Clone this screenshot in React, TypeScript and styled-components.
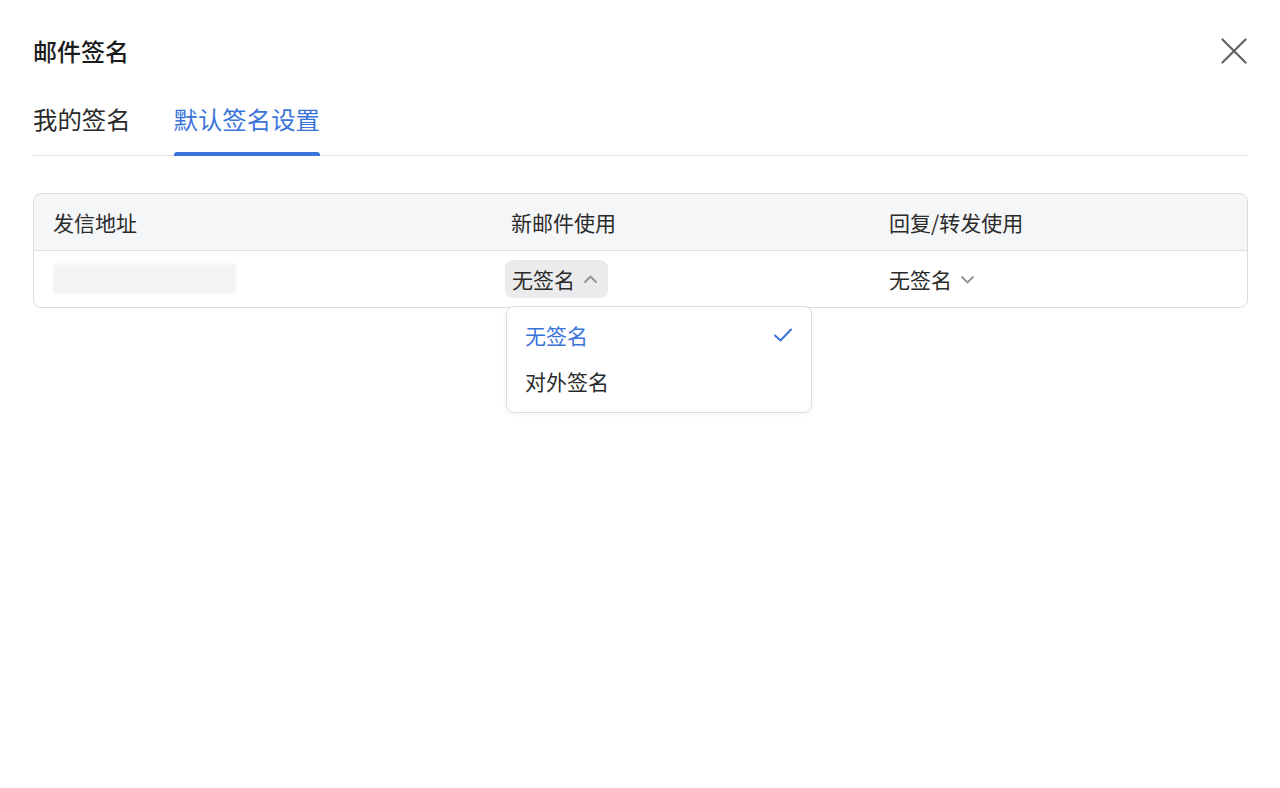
import React from "react";
import styled, { createGlobalStyle } from "styled-components";

const GlobalStyle = createGlobalStyle`
  html, body {
    margin: 0;
    padding: 0;
    background: #ffffff;
  }
  body {
    font-family: "Noto Sans CJK SC", "Noto Sans", Inter, sans-serif;
    color: #222222;
    -webkit-font-smoothing: antialiased;
  }
`;

const Dialog = styled.div`
  width: 1280px;
  height: 788px;
  box-sizing: border-box;
  padding: 35px 32px 0 33px;
  background: #ffffff;
`;

const Header = styled.div`
  display: flex;
  align-items: center;
  justify-content: space-between;
  height: 32px;
`;

const Title = styled.h1`
  margin: 0;
  font-size: 24px;
  line-height: 32px;
  font-weight: 500;
  color: #1c1c1c;
`;

const CloseButton = styled.button`
  display: flex;
  align-items: center;
  justify-content: center;
  width: 30px;
  height: 30px;
  margin-right: -1px;
  padding: 0;
  border: none;
  background: transparent;
  cursor: pointer;
`;

const TabBar = styled.div`
  display: flex;
  gap: 43px;
  margin-top: 21px;
  border-bottom: 1px solid #e2e2e4;
`;

const Tab = styled.div<{ $active?: boolean }>`
  position: relative;
  padding: 15px 0 20px;
  font-size: 24.4px;
  line-height: 32px;
  color: ${(p) => (p.$active ? "#3a74db" : "#2a2a2a")};
  &::after {
    content: "";
    display: ${(p) => (p.$active ? "block" : "none")};
    position: absolute;
    left: 0;
    right: 0;
    bottom: -1px;
    height: 4px;
    border-radius: 3px 3px 0 0;
    background: #3a74db;
  }
`;

const Table = styled.div`
  margin-top: 37px;
  border: 1px solid #dcdcde;
  border-radius: 8px;
`;

const Row = styled.div<{ $head?: boolean }>`
  display: grid;
  grid-template-columns: 458px 378px 1fr;
  height: 56px;
  background: ${(p) => (p.$head ? "#f5f6f8" : "#ffffff")};
  border-bottom: ${(p) => (p.$head ? "1px solid #dfe0e3" : "none")};
  border-radius: ${(p) => (p.$head ? "8px 8px 0 0" : "0 0 8px 8px")};
`;

const Cell = styled.div`
  position: relative;
  display: flex;
  align-items: center;
  padding-left: 19px;
  font-size: 21px;
  color: #2b2b2b;
`;

const AddressMask = styled.div`
  width: 183px;
  height: 30px;
  border-radius: 4px;
  background: #f3f3f4;
  filter: blur(1.5px);
`;

const Select = styled.div<{ $open?: boolean }>`
  display: flex;
  align-items: center;
  gap: 7px;
  height: 38px;
  margin-left: ${(p) => (p.$open ? "-6px" : "0")};
  padding: ${(p) => (p.$open ? "0 9px 0 7px" : "0")};
  border-radius: 8px;
  background: ${(p) => (p.$open ? "#ebebed" : "transparent")};
  font-size: 21px;
  color: #2b2b2b;
`;

const Menu = styled.div`
  position: absolute;
  top: 55px;
  left: 14px;
  width: 306px;
  box-sizing: border-box;
  padding: 5px 0 8px;
  border: 1px solid #dcdcde;
  border-radius: 8px;
  background: #ffffff;
  box-shadow: 0 2px 6px rgba(0, 0, 0, 0.04);
  z-index: 2;
`;

const MenuItem = styled.div<{ $selected?: boolean }>`
  display: flex;
  align-items: center;
  justify-content: space-between;
  height: 46px;
  padding: 0 18px 0 18px;
  font-size: 21px;
  color: ${(p) => (p.$selected ? "#3a74db" : "#2b2b2b")};
`;

const Chevron = ({ up }: { up?: boolean }) => (
  <svg width="17" height="17" viewBox="0 0 17 17" fill="none">
    <path
      d={up ? "M3 11 L8.5 5.5 L14 11" : "M3 6 L8.5 11.5 L14 6"}
      stroke="#929295"
      strokeWidth="1.8"
      strokeLinecap="round"
      strokeLinejoin="round"
    />
  </svg>
);

const Check = () => (
  <svg width="20" height="16" viewBox="0 0 20 16" fill="none">
    <path
      d="M2 8.5 L7.5 13.5 L18 2.5"
      stroke="#3a74db"
      strokeWidth="2"
      strokeLinecap="round"
      strokeLinejoin="round"
    />
  </svg>
);

const CloseIcon = () => (
  <svg width="26" height="26" viewBox="0 0 26 26" fill="none">
    <path
      d="M1.5 1.5 L24.5 24.5 M24.5 1.5 L1.5 24.5"
      stroke="#616163"
      strokeWidth="2.2"
      strokeLinecap="round"
    />
  </svg>
);

export default function App() {
  return (
    <>
      <GlobalStyle />
      <Dialog>
        <Header>
          <Title>邮件签名</Title>
          <CloseButton aria-label="关闭">
            <CloseIcon />
          </CloseButton>
        </Header>

        <TabBar>
          <Tab>我的签名</Tab>
          <Tab $active>默认签名设置</Tab>
        </TabBar>

        <Table>
          <Row $head>
            <Cell>发信地址</Cell>
            <Cell>新邮件使用</Cell>
            <Cell>回复/转发使用</Cell>
          </Row>
          <Row>
            <Cell>
              <AddressMask />
            </Cell>
            <Cell>
              <Select $open>
                无签名
                <Chevron up />
              </Select>
              <Menu>
                <MenuItem $selected>
                  无签名
                  <Check />
                </MenuItem>
                <MenuItem>对外签名</MenuItem>
              </Menu>
            </Cell>
            <Cell>
              <Select>
                无签名
                <Chevron />
              </Select>
            </Cell>
          </Row>
        </Table>
      </Dialog>
    </>
  );
}
